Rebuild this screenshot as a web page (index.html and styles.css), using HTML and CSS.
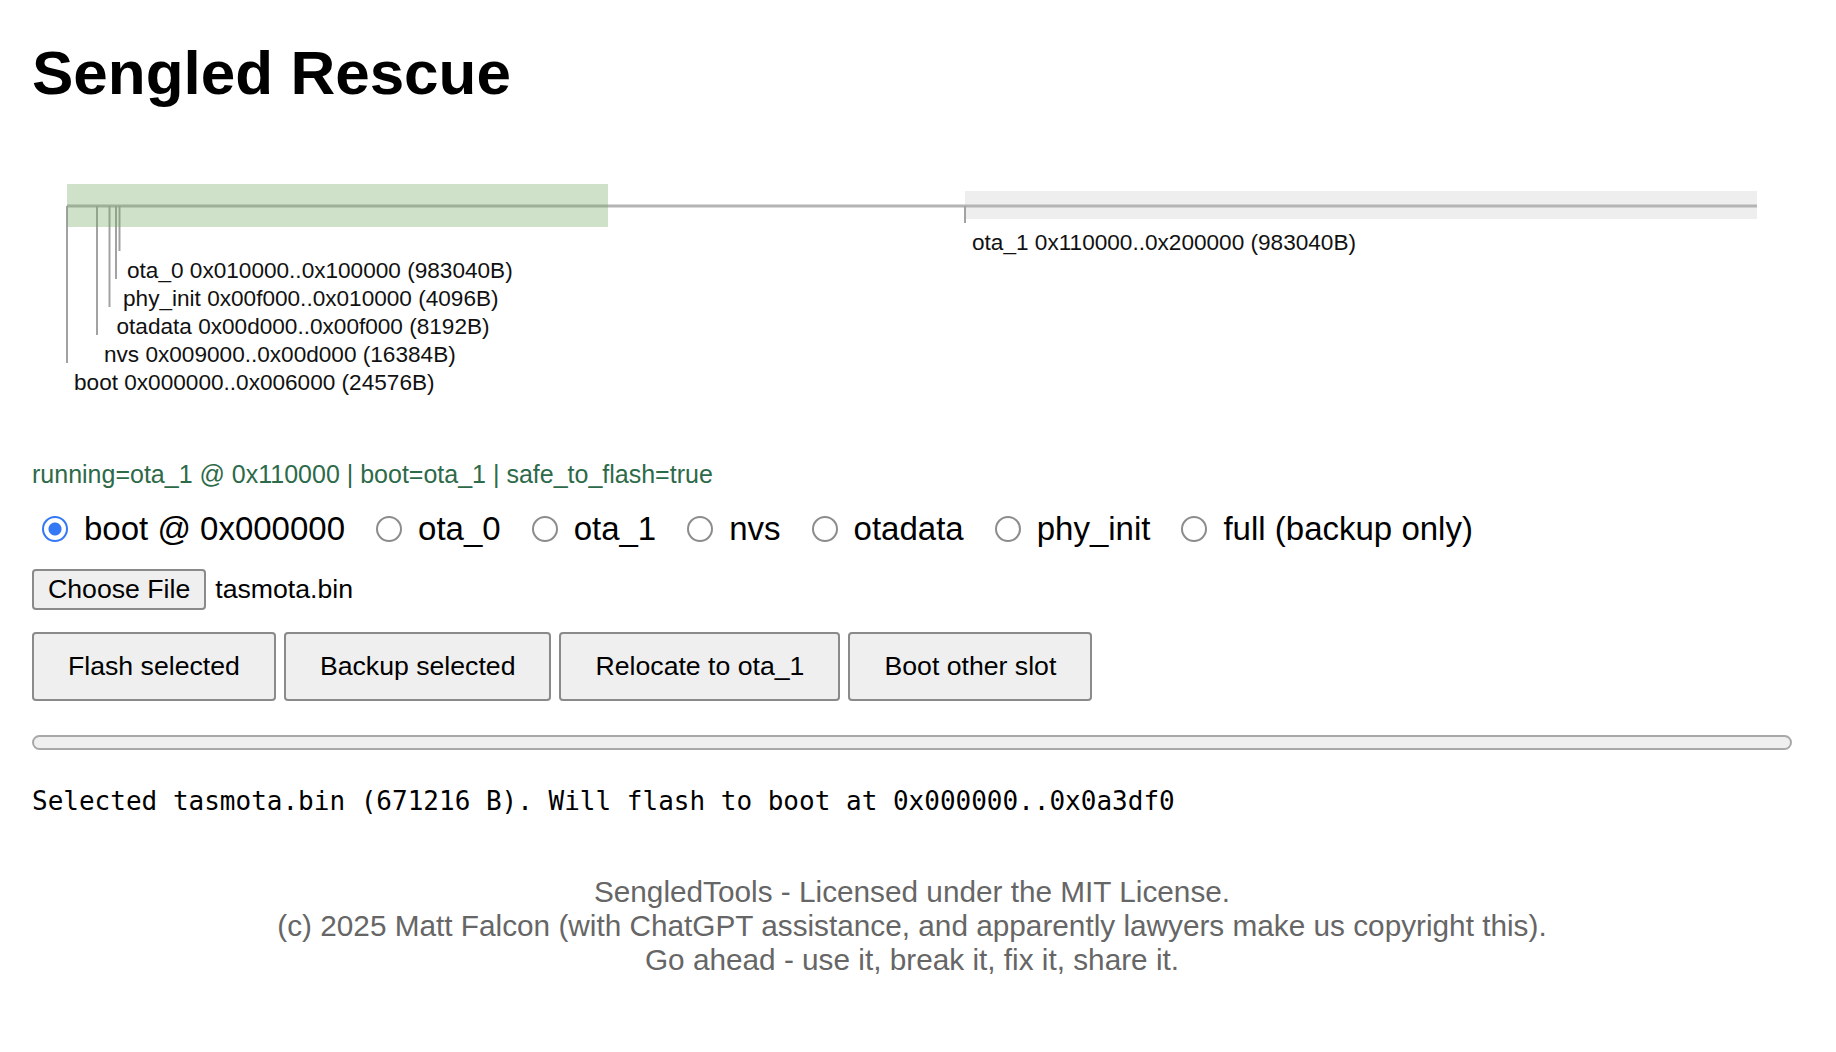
FILE: index.html
```html
<!DOCTYPE html>
<html lang="en">
<head>
<meta charset="utf-8">
<title>Sengled Rescue</title>
<link rel="stylesheet" href="styles.css">
</head>
<body>
<main class="page">
  <h1 class="title">Sengled Rescue</h1>

  <svg class="map" width="1760" height="310" viewBox="0 0 1760 310" xmlns="http://www.w3.org/2000/svg">
    <rect class="running" x="933" y="41" width="792" height="28"/>
    <line class="axis" x1="35" y1="56" x2="1725" y2="56"/>
    <line class="tick" x1="35" y1="56" x2="35" y2="213"/>
    <line class="tick" x1="65" y1="56" x2="65" y2="185"/>
    <line class="tick" x1="77.5" y1="56" x2="77.5" y2="157"/>
    <line class="tick" x1="84" y1="56" x2="84" y2="129"/>
    <line class="tick" x1="87.5" y1="56" x2="87.5" y2="101"/>
    <line class="tick" x1="933" y1="56" x2="933" y2="73"/>
    <rect class="target" x="35" y="34" width="541" height="43"/>
    <text class="lbl" x="940" y="100">ota_1 0x110000..0x200000 (983040B)</text>
    <text class="lbl" x="95" y="128">ota_0 0x010000..0x100000 (983040B)</text>
    <text class="lbl" x="91" y="156">phy_init 0x00f000..0x010000 (4096B)</text>
    <text class="lbl" x="84.5" y="184">otadata 0x00d000..0x00f000 (8192B)</text>
    <text class="lbl" x="72" y="212">nvs 0x009000..0x00d000 (16384B)</text>
    <text class="lbl" x="42" y="240">boot 0x000000..0x006000 (24576B)</text>
  </svg>

  <div class="status">running=ota_1 @ 0x110000 | boot=ota_1 | safe_to_flash=true</div>

  <div class="slots">
    <label class="slot"><input class="radio" type="radio" name="slot" checked><span>boot @ 0x000000</span></label>
    <label class="slot"><input class="radio" type="radio" name="slot"><span>ota_0</span></label>
    <label class="slot"><input class="radio" type="radio" name="slot"><span>ota_1</span></label>
    <label class="slot"><input class="radio" type="radio" name="slot"><span>nvs</span></label>
    <label class="slot"><input class="radio" type="radio" name="slot"><span>otadata</span></label>
    <label class="slot"><input class="radio" type="radio" name="slot"><span>phy_init</span></label>
    <label class="slot"><input class="radio" type="radio" name="slot"><span>full (backup only)</span></label>
  </div>

  <div class="file-row">
    <span class="file-btn">Choose File</span>
    <span class="file-name">tasmota.bin</span>
  </div>

  <div class="actions">
    <button class="btn" type="button">Flash selected</button>
    <button class="btn" type="button">Backup selected</button>
    <button class="btn" type="button">Relocate to ota_1</button>
    <button class="btn" type="button">Boot other slot</button>
  </div>

  <div class="progress"></div>

  <pre class="log">Selected tasmota.bin (671216 B). Will flash to boot at 0x000000..0x0a3df0</pre>

  <footer class="footer">SengledTools - Licensed under the MIT License.<br>(c) 2025 Matt Falcon (with ChatGPT assistance, and apparently lawyers make us copyright this).<br>Go ahead - use it, break it, fix it, share it.</footer>
</main>
</body>
</html>
```

FILE: styles.css
```css
html, body {
  margin: 0;
  padding: 0;
  background: #ffffff;
}

body {
  font-family: "Liberation Sans", Arial, Helvetica, sans-serif;
  color: #000;
}

.page {
  padding: 0 44px 40px 32px;
}

.title {
  margin: 37px 0 0 0;
  font-size: 62px;
  line-height: 71px;
  font-weight: 700;
}

.map {
  display: block;
  margin-top: 42px;
}

.running {
  fill: #eeeeee;
}

.axis {
  stroke: #b4b4b4;
  stroke-width: 3;
}

.tick {
  stroke: #a2a2a2;
  stroke-width: 2;
}

.target {
  fill: rgb(118, 169, 98);
  fill-opacity: 0.35;
}

.lbl {
  font-family: "Liberation Sans", Arial, Helvetica, sans-serif;
  font-size: 22.6px;
  fill: #111;
}

.status {
  font-size: 25px;
  line-height: 29px;
  color: #2d6a49;
}

.slots {
  display: flex;
  align-items: center;
  gap: 31px;
  margin-top: 21px;
  padding-left: 10px;
  font-size: 33px;
  line-height: 38px;
}

.slot {
  display: inline-flex;
  align-items: center;
}

.radio {
  appearance: none;
  -webkit-appearance: none;
  box-sizing: border-box;
  width: 26px;
  height: 26px;
  margin: 0 16px 0 0;
  border: 2px solid #8c8c8c;
  border-radius: 50%;
  background: #fff;
}

.radio:checked {
  border-color: #3478f6;
  background: radial-gradient(circle, #3478f6 0 6px, #ffffff 7px);
}

.file-row {
  display: flex;
  align-items: center;
  margin-top: 21px;
  font-size: 26.67px;
}

.file-btn {
  display: inline-block;
  padding: 3px 14px;
  line-height: 31px;
  border: 2px solid #8a8a8a;
  border-radius: 4px;
  background: #efefef;
}

.file-name {
  margin-left: 9px;
}

.actions {
  display: flex;
  gap: 8px;
  margin-top: 22px;
}

.btn {
  box-sizing: border-box;
  height: 69px;
  font-family: "Liberation Sans", Arial, Helvetica, sans-serif;
  font-size: 26.67px;
  line-height: 31px;
  padding: 0 34px;
  border: 2px solid #8a8a8a;
  border-radius: 4px;
  background: #efefef;
  color: #000;
}

.progress {
  box-sizing: border-box;
  margin-top: 34px;
  height: 15px;
  border: 2px solid #a8a8a8;
  border-radius: 8px;
  background: #efefef;
}

.log {
  margin: 36px 0 0 0;
  font-family: "DejaVu Sans Mono", "Liberation Mono", monospace;
  font-size: 26px;
  line-height: 30px;
  color: #000;
}

.footer {
  margin-top: 59px;
  text-align: center;
  font-size: 29.75px;
  line-height: 34px;
  color: #666666;
}
```
